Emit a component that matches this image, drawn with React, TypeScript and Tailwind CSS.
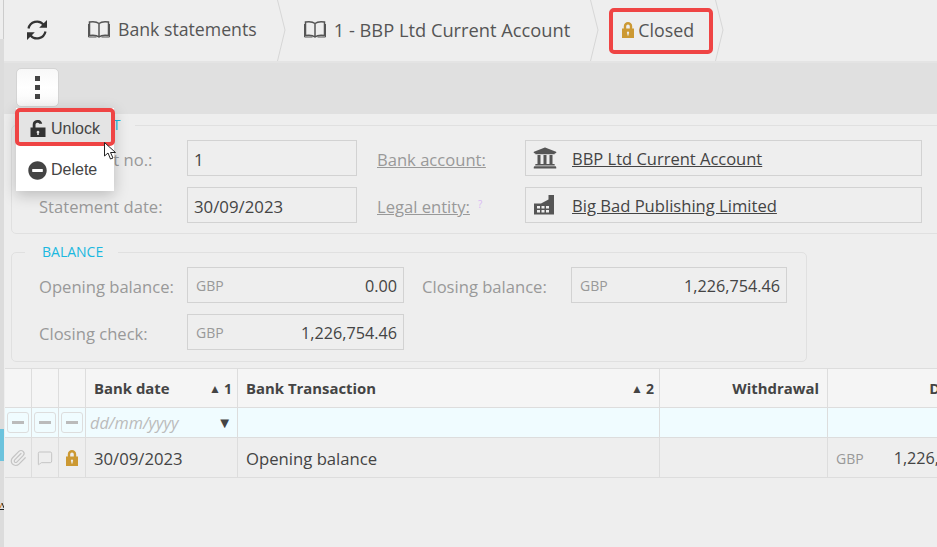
import React from 'react'
import { MessageSquare, Paperclip } from 'lucide-react'
import { FaMinusCircle, FaUniversity } from 'react-icons/fa'

const LockIcon = ({ className }: { className?: string }) => (
  <svg viewBox="0 0 12 16" className={className} fill="currentColor">
    <path fillRule="evenodd" d="M1.800 6.500V4.200a4.200 4.200 0 0 1 8.400 0v2.300H12V16H0V6.500h1.800zm2.400 0h3.600V4.200a1.800 1.800 0 0 0-3.600 0v2.300zM6 9.500a1.200 1.200 0 0 0-.6 2.200V13.500h1.200V11.700A1.200 1.200 0 0 0 6 9.500z" />
  </svg>
)

const UnlockIcon = ({ className }: { className?: string }) => (
  <svg viewBox="0 0 15 17" className={className} fill="currentColor">
    <path fillRule="evenodd" d="M0 7.500h2.200V4.800a4.800 4.800 0 0 1 9.500-1h-2.900a2 2 0 0 0-3.800 1v2.700H15V17H0V7.500zm7.500 3.300a1.400 1.400 0 0 0-.8 2.500V15h1.600v-1.700a1.400 1.400 0 0 0-.8-2.500z" />
  </svg>
)

const FactoryIcon = ({ className }: { className?: string }) => (
  <svg viewBox="0 0 21 20" className={className} fill="currentColor">
    <path fillRule="evenodd" d="M14.500 0H20v19.500H0V8.500L7 8.500 14.500 4.500V0zM3 11v2.500h3V11H3zm4.500 0v2.500h3V11h-3zm4.500 0v2.500h3V11h-3zM3 15v2.500h3V15H3zm4.500 0v2.500h3V15h-3zm4.500 0v2.500h3V15h-3z" />
  </svg>
)

const BookIcon = () => (
  <svg viewBox="0 0 22 19" className="h-[19px] w-[22px] shrink-0" fill="none" stroke="#555" strokeWidth="1.500">
    <path d="M11 3.500C9 1.800 5 1.500 1.500 2V15.500C5 15 9 15.300 11 17C13 15.300 17 15 20.500 15.500V2C17 1.500 13 1.800 11 3.500V17" />
    <path d="M0.500 4V17H8.500M21.500 4V17H13.500" strokeWidth="1" />
  </svg>
)

const SyncIcon = () => (
  <svg viewBox="0 0 22 22" className="h-[22px] w-[22px]" fill="none" stroke="#333" strokeWidth="2.200">
    <path d="M2.500 9.500A8.700 8.700 0 0 1 17.500 5.500" />
    <path d="M19.500 12.500A8.700 8.700 0 0 1 4.500 16.500" />
    <path d="M21 1V8.800H13.200Z M1 21V13.200H8.800Z" fill="#333" stroke="none" />
  </svg>
)

const Chevron = () => (
  <svg viewBox="0 0 9 61" className="h-[61px] w-[9px] shrink-0" fill="none" stroke="#d6d6d6" strokeWidth="1">
    <path d="M0.500 0 L8 30 L0.500 61" />
  </svg>
)

const Field = ({ className, children }: { className: string; children: React.ReactNode }) => (
  <div className={`flex h-[36px] shrink-0 items-center border border-[#d2d2d2] ${className}`}>{children}</div>
)

const Money = ({ className, value }: { className: string; value: string }) => (
  <Field className={className}>
    <span className="pl-[8px] text-[14px] text-[#999]">GBP</span>
    <span className="ml-auto pr-[6px] pt-[3px] text-[16.200px] text-[#444]">{value}</span>
  </Field>
)

const Label = ({ className, children }: { className: string; children: React.ReactNode }) => (
  <div className={`shrink-0 pt-[4px] text-[16.600px] text-[#999] ${className}`}>{children}</div>
)

const cell = 'border-r border-[#ddd]'
const cols = 'grid-cols-[27px_27px_27px_152px_422px_168px_166px]'

const FilterButton = () => (
  <div className={`flex items-center justify-center ${cell}`}>
    <div className="flex h-[21px] w-[22px] items-center justify-center rounded-[3px] border border-[#ddd]">
      <div className="h-[3px] w-[12px] bg-[#bbb]" />
    </div>
  </div>
)

export default function App() {
  return (
    <div className="relative flex h-[547px] w-[937px] overflow-hidden bg-[#eee] font-['Open_Sans',sans-serif] text-[#444]">
      {/* left page gutter */}
      <div className="w-[4px] shrink-0 bg-[#dcdcdc]">
        <div className="h-[39px] border-r border-[#ccc] bg-[#eee]" />
        <div className="mt-[390px] h-[32px] w-[4px] bg-[#6cc3dd]" />
        <svg viewBox="0 0 4 8" className="mt-[41px] h-[8px] w-[4px]" fill="none" strokeWidth="1">
          <path d="M0 6 L2 1" stroke="#d9822b" />
          <path d="M2 1 L4 6 M0 7.500 H4" stroke="#222" />
        </svg>
      </div>

      <div className="min-w-0 flex-1">
        {/* breadcrumb */}
        <div className="flex h-[63px] items-start border-b-2 border-[#e4e4e4]">
          <div className="flex h-[61px] w-[74px] shrink-0 items-center pb-[2px] pl-[22px]">
            <SyncIcon />
          </div>
          <div className="flex h-[61px] items-center pb-[2px] pl-[10px] pr-[20px]">
            <BookIcon />
            <span className="ml-[8px] text-[17.700px] text-[#555]">Bank statements</span>
          </div>
          <Chevron />
          <div className="flex h-[61px] items-center pb-[2px] pl-[18px] pr-[20px]">
            <BookIcon />
            <span className="ml-[8px] text-[18.300px] text-[#555]">1 - BBP Ltd Current Account</span>
          </div>
          <Chevron />
          <div className="ml-[10px] mt-[8px] flex h-[46px] w-[104px] items-center rounded-[5px] border-[4px] border-[#ef4444] pb-[2px] pl-[9px]">
            <LockIcon className="h-[16px] w-[12px] text-[#cc9933]" />
            <span className="ml-[4px] text-[17.800px] text-[#555]">Closed</span>
          </div>
          <div className="ml-[2px]">
            <Chevron />
          </div>
        </div>

        {/* toolbar */}
        <div className="h-[51px] bg-[#e0e0e0] pl-[12px] pt-[5px]">
          <div className="flex h-[39px] w-[43px] flex-col items-center justify-center gap-[4px] rounded-[5px] border border-[#d4d4d4] bg-gradient-to-b from-[#f8f8f8] via-white to-[#f8f8f8]">
            <div className="h-[5px] w-[5px] bg-[#444]" />
            <div className="h-[5px] w-[5px] bg-[#444]" />
            <div className="h-[5px] w-[5px] bg-[#444]" />
          </div>
        </div>

        <div className="pl-[7px] pt-[1px]">
          {/* statement */}
          <fieldset className="w-[980px] rounded-[5px] border border-[#e0e0e0] pb-[10px]">
            <legend className="ml-[13px] pl-[17px] pr-[15px] text-[14px] leading-[20px] text-[#1ab8e0]">STATEMENT</legend>
            <div className="mt-[5px] flex items-center pl-[27px]">
              <Label className="w-[148px]">Statement no.:</Label>
              <Field className="w-[170px] pl-[6px] pt-[4px] text-[16.800px]">1</Field>
              <Label className="ml-[20px] w-[148px] underline">Bank account:</Label>
              <Field className="w-[397px] pl-[7px]">
                <FaUniversity className="h-[24px] w-[24px] text-[#555]" />
                <span className="ml-[15px] pt-[3px] text-[16.500px] underline">BBP Ltd Current Account</span>
              </Field>
            </div>
            <div className="mt-[11px] flex items-center pl-[27px]">
              <Label className="w-[148px]">Statement date:</Label>
              <Field className="w-[170px] pl-[6px] pt-[4px] text-[16.800px]">30/09/2023</Field>
              <Label className="ml-[20px] w-[148px]">
                <span className="underline">Legal entity:</span>
                <sup className="ml-[8px] text-[10px] text-[#d9b8f5]">?</sup>
              </Label>
              <Field className="w-[397px] pl-[8px]">
                <FactoryIcon className="h-[20px] w-[21px] text-[#555]" />
                <span className="ml-[17px] pt-[3px] text-[16.600px] underline">Big Bad Publishing Limited</span>
              </Field>
            </div>
          </fieldset>

          {/* balance */}
          <fieldset className="mt-[8px] w-[796px] rounded-[5px] border border-[#e0e0e0] pb-[11px]">
            <legend className="ml-[13px] pl-[17px] pr-[15px] text-[14px] leading-[20px] text-[#1ab8e0]">BALANCE</legend>
            <div className="mt-[5px] flex items-center pl-[27px]">
              <Label className="w-[148px]">Opening balance:</Label>
              <Money className="w-[217px]" value="0.00" />
              <Label className="ml-[18px] w-[149px]">Closing balance:</Label>
              <Money className="w-[216px]" value="1,226,754.46" />
            </div>
            <div className="mt-[11px] flex items-center pl-[27px]">
              <Label className="w-[148px]">Closing check:</Label>
              <Money className="w-[217px]" value="1,226,754.46" />
            </div>
          </fieldset>
        </div>

        {/* transactions grid */}
        <div className="ml-[1px] mt-[6px] w-[1000px]">
          <div className={`grid h-[40px] border-y border-[#ddd] bg-[#f5f5f5] text-[14.900px] font-bold ${cols}`}>
            <div className={cell} />
            <div className={cell} />
            <div className={cell} />
            <div className={`flex items-center pl-[8px] pr-[5px] pt-[1px] ${cell}`}>
              <span>Bank date</span>
              <span className="ml-auto text-[12px]">▲</span>
              <span className="ml-[3px] text-[14px]">1</span>
            </div>
            <div className={`flex items-center pl-[8px] pr-[5px] pt-[1px] ${cell}`}>
              <span>Bank Transaction</span>
              <span className="ml-auto text-[12px]">▲</span>
              <span className="ml-[3px] text-[14px]">2</span>
            </div>
            <div className={`flex items-center justify-end pr-[8px] pt-[1px] ${cell}`}>Withdrawal</div>
            <div className="flex items-center justify-end pr-[8px] pt-[1px]">Deposit</div>
          </div>
          <div className={`grid h-[30px] border-b border-[#ddd] bg-[#f0fcff] ${cols}`}>
            <FilterButton />
            <FilterButton />
            <FilterButton />
            <div className={`flex items-center pl-[4px] pr-[5px] ${cell}`}>
              <span className="pt-[2px] text-[16.300px] italic text-[#bbb]">dd/mm/yyyy</span>
              <span className="ml-auto text-[15px] text-[#444]">▼</span>
            </div>
            <div className={cell} />
            <div className={cell} />
            <div />
          </div>
          <div className={`grid h-[40px] border-b border-[#ddd] text-[16.700px] ${cols}`}>
            <div className={`flex items-center justify-center ${cell}`}>
              <Paperclip className="h-[18px] w-[18px] text-[#c4c4c4]" strokeWidth={1.600} />
            </div>
            <div className={`flex items-center justify-center ${cell}`}>
              <MessageSquare className="h-[16px] w-[16px] text-[#c4c4c4]" strokeWidth={1.500} />
            </div>
            <div className={`flex items-center justify-center ${cell}`}>
              <LockIcon className="h-[16px] w-[12px] text-[#cc9933]" />
            </div>
            <div className={`flex items-center pl-[8px] pt-[2px] ${cell}`}>30/09/2023</div>
            <div className={`flex items-center pl-[8px] pt-[2px] ${cell}`}>Opening balance</div>
            <div className={cell} />
            <div className="flex items-center pl-[8px] pt-[2px]">
              <span className="text-[14px] text-[#999]">GBP</span>
              <span className="ml-[30px] text-[16.200px]">1,226,754.46</span>
            </div>
          </div>
        </div>
      </div>

      {/* open actions menu */}
      <div className="absolute left-[16px] top-[108px] w-[98px] bg-white font-['Liberation_Sans',sans-serif] text-[16px] text-[#444] shadow-[0_4px_14px_rgba(0,0,0,0.22)]">
        <div className="-mx-[1px] flex h-[38px] items-center rounded-[5px] border-[4px] border-[#ef4444] bg-[#e4e4e4] pl-[11px] pt-[3px]">
          <UnlockIcon className="h-[17px] w-[16px] text-[#333]" />
          <span className="ml-[5px]">Unlock</span>
        </div>
        <div className="flex h-[45px] items-center pl-[12px] pt-[3px]">
          <FaMinusCircle className="h-[19px] w-[19px] text-[#444]" />
          <span className="ml-[4px]">Delete</span>
        </div>
      </div>

      {/* mouse pointer */}
      <svg viewBox="0 0 15 18" className="absolute left-[104px] top-[142px] h-[18px] w-[15px]" fill="white" stroke="#222" strokeWidth="1">
        <path d="M0.500 0.500 L0.500 14 L4 11 L6.500 17 L9 16 L6.500 10.500 L11.500 10.500 Z" />
      </svg>
    </div>
  )
}
